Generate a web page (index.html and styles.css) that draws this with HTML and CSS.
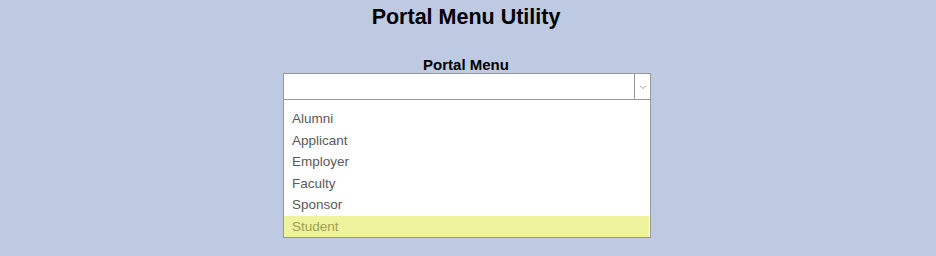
FILE: index.html
```html
<!DOCTYPE html>
<html>
<head>
<meta charset="utf-8">
<link rel="stylesheet" href="styles.css">
</head>
<body>
<h1 class="title">Portal Menu Utility</h1>
<div class="field">
  <div class="label">Portal Menu</div>
  <div class="combo">
    <div class="select">
      <div class="select-value"></div>
      <div class="select-arrow">
        <svg width="8" height="5" viewBox="0 0 8 5"><path d="M1 1 L4 3.5 L7 1" fill="none" stroke="#aaa" stroke-width="1"/></svg>
      </div>
    </div>
    <ul class="list">
      <li class="item">Alumni</li>
      <li class="item">Applicant</li>
      <li class="item">Employer</li>
      <li class="item">Faculty</li>
      <li class="item">Sponsor</li>
      <li class="item item-active">Student</li>
    </ul>
  </div>
</div>
</body>
</html>
```
FILE: styles.css
```css
html, body {
  margin: 0;
  padding: 0;
  background: #bdcae2;
  font-family: "Liberation Sans", Arial, sans-serif;
}
body {
  width: 936px;
  height: 256px;
  overflow: hidden;
}
.title {
  margin: 0;
  padding-top: 5px;
  padding-right: 4px;
  text-align: center;
  font-size: 21.5px;
  font-weight: bold;
  line-height: 24px;
  color: #000;
}
.field {
  display: flex;
  flex-direction: column;
  align-items: center;
  padding-top: 28px;
}
.label {
  font-size: 15px;
  font-weight: bold;
  line-height: 16px;
  color: #000;
  margin-right: 4px;
}
.combo {
  width: 368px;
  margin-left: -2px;
}
.select {
  display: flex;
  height: 25px;
  border: 1px solid #999;
  background: #fff;
}
.select-value {
  flex: 1;
}
.select-arrow {
  width: 15px;
  border-left: 1px solid #999;
  display: flex;
  align-items: center;
  justify-content: center;
}
.select-arrow svg {
  display: block;
  margin-top: 1px;
}
.list {
  list-style: none;
  margin: 0;
  padding: 8px 1px 0 0;
  border: 1px solid #999;
  border-top: none;
  background: #fff;
}
.item {
  height: 21.5px;
  line-height: 22.5px;
  font-size: 13.5px;
  color: #5a5a5a;
  padding-left: 8px;
}
.item-active {
  background: #eef39d;
  color: #9ea052;
}
```
